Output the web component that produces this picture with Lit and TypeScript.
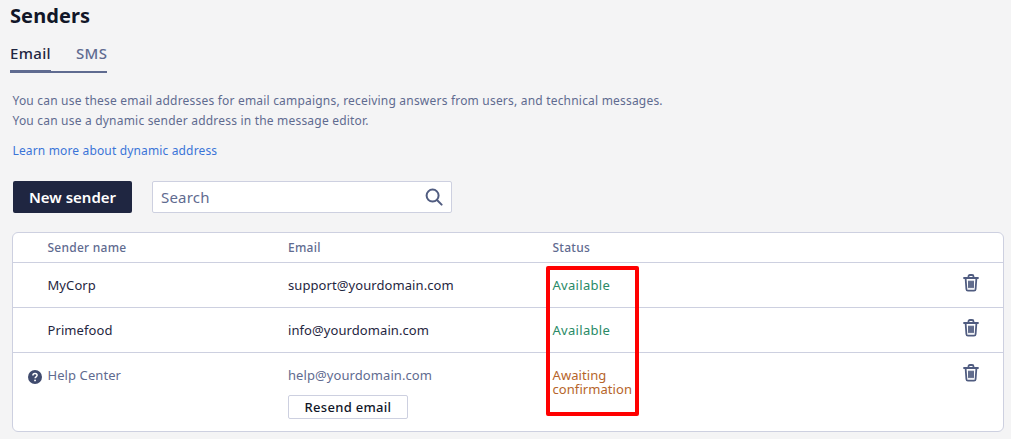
import { LitElement, html, css } from "lit";
import { customElement } from "lit/decorators.js";

const trash = html`<svg class="trash" viewBox="0 0 16 18" width="16" height="18" fill="none" stroke="#505c80" stroke-width="1.8" stroke-linecap="round" stroke-linejoin="round">
  <path d="M1 4h14M5.5 4V2.4C5.5 1.6 6.1 1 6.9 1h2.2c.8 0 1.4.6 1.4 1.4V4"/>
  <path d="M2.6 4l.8 11.2c.05.9.7 1.5 1.6 1.5h6c.9 0 1.55-.6 1.6-1.5L13.4 4"/>
  <path d="M6 7.5v5.8M8 7.5v5.8M10 7.5v5.8"/>
</svg>`;

@customElement("app-root")
export class AppRoot extends LitElement {
  static styles = css`
    :host {
      display: block;
      position: relative;
      width: 1011px;
      height: 439px;
      overflow: hidden;
      background: #f4f4f5;
      font-family: "Noto Sans", "Liberation Sans", sans-serif;
      font-size: 13px;
      color: #1f2641;
      box-sizing: border-box;
    }
    h1 {
      margin: 0;
      padding: 3px 0 0 10px;
      font-size: 20px;
      line-height: 25px;
      font-weight: 700;
      color: #111628;
      letter-spacing: 0.1px;
    }
    .tabs {
      display: inline-flex;
      gap: 25px;
      margin: 12px 0 0 10px;
      border-bottom: 2px solid #5f6b90;
      font-size: 15px;
      font-weight: 500;
      line-height: 26px;
      height: 31px;
      letter-spacing: 0.35px;
    }
    .tab { color: #5f6b90; }
    .tab.active {
      box-sizing: border-box;
      color: #1f2641;
      border-bottom: 3.5px solid #5f6b90;
      height: 33px;
    }
    .intro {
      margin: 18px 0 0 12.5px;
      color: #5f6b90;
      line-height: 19.5px;
      font-size: 12px;
      letter-spacing: 0.2px;
    }
    .intro p { margin: 0; }
    .link {
      display: block;
      margin: 11px 0 0 12.5px;
      color: #3b74d8;
      font-size: 12px;
      letter-spacing: 0.15px;
      line-height: 19.5px;
      text-decoration: none;
    }
    .toolbar {
      display: flex;
      gap: 20px;
      margin: 20px 0 0 13px;
    }
    .primary {
      width: 119px;
      height: 32px;
      background: #1f2641;
      border: 0;
      border-radius: 2px;
      color: #fff;
      font: 600 15px "Noto Sans", sans-serif;
      padding: 0;
    }
    .search {
      box-sizing: border-box;
      width: 300px;
      height: 32px;
      display: flex;
      align-items: center;
      justify-content: space-between;
      background: #fff;
      border: 1px solid #cdd0e0;
      border-radius: 2px;
      padding: 0 8px 0 8px;
      color: #5f6b90;
      font-size: 15px;
      letter-spacing: 0.2px;
    }
    .table {
      box-sizing: border-box;
      width: 992px;
      height: 200px;
      margin: 19px 0 0 12px;
      background: #fff;
      border: 1px solid #cdd0e0;
      border-radius: 6px;
      display: grid;
      grid-template-rows: 29px 45px 45px 1fr;
    }
    .row {
      display: grid;
      grid-template-columns: 34.5px 240.5px 264.5px 1fr 43px;
      align-items: center;
    }
    .row + .row { border-top: 1px solid #cdd0e0; }
    .head {
      color: #5f6b90;
      font-size: 12px;
      font-weight: 500;
      letter-spacing: 0.25px;
    }
    .body { font-size: 13px; color: #1f2641; letter-spacing: 0.08px; }
    .ok { color: #2a8a66; letter-spacing: 0.3px; }
    .wait { color: #b6652a; line-height: 14px; letter-spacing: 0.07px; margin-top: 2px; }
    .action { display: flex; padding-left: 3px; margin-top: -4px; }
    .row.pending { align-items: start; padding-top: 13px; }
    .pending .action { margin-top: -2px; }
    .muted { color: #5f6b90; }
    .q { padding-left: 15px; padding-top: 4px; display: flex; }
    .stack { display: flex; flex-direction: column; align-items: flex-start; gap: 11px; }
    .resend {
      box-sizing: border-box;
      width: 120px;
      height: 24px;
      background: #fff;
      border: 1px solid #cdd0e0;
      border-radius: 2px;
      padding: 0;
      font: 500 13px "Noto Sans", sans-serif;
      letter-spacing: 0.3px;
      color: #111628;
    }
    .marker {
      position: absolute;
      left: 545.5px;
      top: 266px;
      width: 93.5px;
      height: 150px;
      box-sizing: border-box;
      border: 4px solid #ff0000;
      border-radius: 2px;
      pointer-events: none;
    }
  `;

  render() {
    return html`
      <h1>Senders</h1>
      <div class="tabs">
        <span class="tab active">Email</span>
        <span class="tab">SMS</span>
      </div>
      <div class="intro">
        <p>You can use these email addresses for email campaigns, receiving answers from users, and technical messages.</p>
        <p>You can use a dynamic sender address in the message editor.</p>
      </div>
      <a class="link" href="#">Learn more about dynamic address</a>
      <div class="toolbar">
        <button class="primary">New sender</button>
        <div class="search">
          <span>Search</span>
          <svg viewBox="0 0 18 18" width="18" height="18" fill="none" stroke="#505c80" stroke-width="2" stroke-linecap="round">
            <circle cx="7.6" cy="7.6" r="6"/><path d="M12 12l4.6 4.6"/>
          </svg>
        </div>
      </div>
      <div class="table">
        <div class="row head">
          <span></span><span>Sender name</span><span>Email</span><span>Status</span><span></span>
        </div>
        <div class="row body">
          <span></span><span>MyCorp</span><span>support@yourdomain.com</span><span class="ok">Available</span>
          <span class="action">${trash}</span>
        </div>
        <div class="row body">
          <span></span><span>Primefood</span><span>info@yourdomain.com</span><span class="ok">Available</span>
          <span class="action">${trash}</span>
        </div>
        <div class="row body pending">
          <span class="q">
            <svg viewBox="0 0 14 14" width="14" height="14">
              <circle cx="7" cy="7" r="7" fill="#404b6e"/>
              <path d="M4.9 5.4c0-1.2 1-1.9 2.1-1.9s2.1.7 2.1 1.8c0 1.5-2 1.5-2 2.9" fill="none" stroke="#fff" stroke-width="1.5"/>
              <circle cx="7.05" cy="10.4" r="0.95" fill="#fff"/>
            </svg>
          </span>
          <span class="muted">Help Center</span>
          <span class="stack">
            <span class="muted">help@yourdomain.com</span>
            <button class="resend">Resend email</button>
          </span>
          <span class="wait">Awaiting<br />confirmation</span>
          <span class="action">${trash}</span>
        </div>
      </div>
      <div class="marker"></div>
    `;
  }
}
